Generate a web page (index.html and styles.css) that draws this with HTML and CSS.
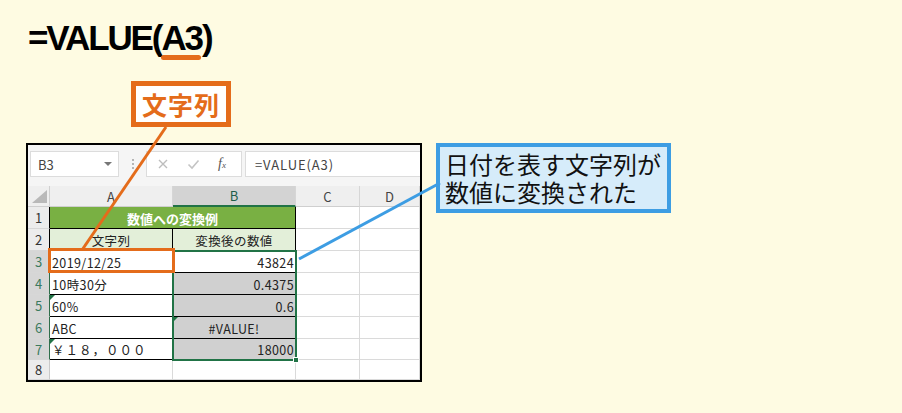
FILE: index.html
```html
<!DOCTYPE html>
<html lang="ja">
<head>
<meta charset="utf-8">
<title>VALUE</title>
<link rel="stylesheet" href="styles.css">
</head>
<body>
<div class="page">
  <h1 class="title">=VALUE(<span class="ref">A3</span>)</h1>
  <div class="tag">文字列</div>
  <div class="main">
    <div class="sheet">
      <div class="toolbar">
        <div class="namebox"><span>B3</span><span class="dd"></span></div>
        <div class="grip"><span></span><span></span><span></span></div>
        <div class="fnbox">
          <svg class="ico" width="12" height="12" viewBox="0 0 12 12"><path d="M2 2 L10 10 M10 2 L2 10" stroke="#bdbdbd" stroke-width="1.4" fill="none"/></svg>
          <svg class="ico" width="13" height="12" viewBox="0 0 13 12"><path d="M1.5 6.5 L5 10 L11.5 2.5" stroke="#c4c4c4" stroke-width="1.6" fill="none"/></svg>
          <span class="fx">f<small>x</small></span>
        </div>
        <div class="formula">=VALUE(A3)</div>
      </div>
      <div class="grid">
        <div class="corner"><span class="tri"></span></div>
        <div class="ch">A</div><div class="ch sel">B</div><div class="ch">C</div><div class="ch">D</div>

        <div class="rh dark">1</div><div class="c d merged">数値への変換例</div><div class="c"></div><div class="c"></div>

        <div class="rh dark">2</div><div class="c d lg center">文字列</div><div class="c d lg center">変換後の数値</div><div class="c"></div><div class="c"></div>

        <div class="rh hi">3</div><div class="c d">2019/12/25</div><div class="c d right">43824</div><div class="c"></div><div class="c"></div>

        <div class="rh hi">4</div><div class="c d">10時30分</div><div class="c d gray right">0.4375</div><div class="c"></div><div class="c"></div>

        <div class="rh hi">5</div><div class="c d err">60%</div><div class="c d gray right">0.6</div><div class="c"></div><div class="c"></div>

        <div class="rh hi">6</div><div class="c d">ABC</div><div class="c d gray center err">#VALUE!</div><div class="c"></div><div class="c"></div>

        <div class="rh hi">7</div><div class="c d err wide">￥１８，０００</div><div class="c d gray right">18000</div><div class="c"></div><div class="c"></div>

        <div class="rh">8</div><div class="c"></div><div class="c"></div><div class="c"></div><div class="c"></div>
      </div>
      <div class="selection"><span class="handle"></span></div>
      <div class="focus"></div>
    </div>
    <div class="callout"><div class="cl">日付を表す文字列が</div><div class="cl">数値に変換された</div></div>
  </div>
  <svg class="leaders" width="902" height="413" viewBox="0 0 902 413">
    <line x1="166" y1="127" x2="82" y2="250" stroke="#e46c1b" stroke-width="3"/>
    <line x1="299" y1="259" x2="440" y2="183" stroke="#3d9de3" stroke-width="3"/>
  </svg>
</div>
</body>
</html>
```

FILE: styles.css
```css
* { box-sizing: border-box; }
html, body { margin: 0; padding: 0; }
body { background: #fefbe2; font-family: "Noto Sans CJK JP", "Noto Sans", sans-serif; }

.page { position: relative; width: 902px; height: 413px; overflow: hidden; }

.title {
  margin: 0;
  padding: 20px 0 0 28px;
  font-family: "Liberation Sans", Arial, sans-serif;
  font-weight: bold;
  font-size: 35px;
  line-height: 35px;
  height: 55px;
  letter-spacing: -2.1px;
  color: #000;
}
.ref { position: relative; }
.ref::after {
  content: "";
  position: absolute;
  left: 0; right: 1px;
  top: 37px;
  height: 5px;
  border-radius: 3px;
  background: #e46c1b;
}

.tag {
  margin: 26px 0 0 131px;
  width: 100px; height: 46px;
  border: 5px solid #e46c1b;
  background: #fff;
  color: #e46c1b;
  font-weight: bold;
  font-size: 25px;
  display: flex; align-items: center; justify-content: center;
  letter-spacing: 1px;
}

.main { display: flex; align-items: flex-start; margin-top: 16px; padding-left: 26px; }

.sheet {
  position: relative;
  width: 396px;
  border: 2px solid #000;
  background: #fff;
  font-size: 12.5px;
  color: #222;
}

.toolbar {
  height: 41px;
  background: #f5f5f5;
  display: flex; align-items: flex-start;
  padding: 6px 0 0 2px;
}
.namebox {
  width: 89px; height: 26px;
  background: #fff; border: 1px solid #dcdcdc;
  display: flex; align-items: center; justify-content: space-between;
  padding: 0 6px 0 7px;
  color: #444; font-size: 13px;
}
.dd { width: 0; height: 0; border-left: 4px solid transparent; border-right: 4px solid transparent; border-top: 4px solid #777; }
.grip { width: 27px; height: 26px; display: flex; flex-direction: column; align-items: center; justify-content: center; gap: 2px; }
.grip span { width: 2px; height: 2px; background: #b5b5b5; }
.fnbox {
  width: 96px; height: 26px;
  background: #fff; border: 1px solid #dcdcdc;
  display: flex; align-items: center;
  padding-left: 10px; gap: 18px;
}
.fx { font-family: "Liberation Serif", serif; font-style: italic; font-size: 14px; color: #555; }
.fx small { font-size: 9px; }
.formula {
  flex: 1; height: 26px; margin-left: 3px;
  background: #fff; border: 1px solid #dcdcdc; border-right: none;
  padding-left: 9px;
  display: flex; align-items: center;
  color: #444; font-size: 13px; letter-spacing: 0.9px;
}

.grid {
  display: grid;
  grid-template-columns: 22px 123px 123px 64px 60px;
  grid-template-rows: 21px 22px 22px 22px 22px 22px 22px 21px 20px;
}
.grid > div { display: flex; align-items: center; position: relative; }

.corner { background: #efefef; border-right: 1px solid #d0d0d0; border-bottom: 1px solid #cfcfcf; }
.tri { position: absolute; right: 2px; bottom: 3px; width: 15px; height: 13px; background: #b9b9b9; clip-path: polygon(100% 0, 100% 100%, 0 100%); }

.ch { background: #efefef; border-right: 1px solid #d6d6d6; border-bottom: 1px solid #cfcfcf; justify-content: center; color: #444; font-size: 13px; }
.ch.sel { background: #d3d3d3; color: #1e5e4a; border-bottom: 2px solid #217346; }

.rh { background: #ececec; border-right: 1px solid #c9c9c9; border-bottom: 1px solid #d7d7d7; justify-content: center; color: #333; font-size: 13px; }
.rh.dark { border-right: 1px solid #000; }
.rh.hi { background: #d6d6d6; color: #3b7a5e; border-right: 1px solid #2f6e4a; }

.c { background: #fff; border-right: 1px solid #dadada; border-bottom: 1px solid #dadada; padding: 1px 2px 0 2px; white-space: nowrap; letter-spacing: 0.4px; }
.c.d { border-right: 1px solid #000; border-bottom: 1px solid #000; }
.c.merged { grid-column: span 2; background: #79b043; color: #fff; font-weight: bold; justify-content: center; font-size: 13px; letter-spacing: 0; }
.c.lg { background: #e3efd9; }
.c.center { justify-content: center; }
.c.right { justify-content: flex-end; padding-right: 1px; }
.c.gray { background: #d0d0d0; }
.c.wide { letter-spacing: 1px; }
.c.err::before {
  content: ""; position: absolute; left: 0; top: 0;
  border-top: 5px solid #217346; border-right: 5px solid transparent;
}

.selection {
  position: absolute; left: 144px; top: 105px; width: 125px; height: 111px;
  border: 2px solid #217346;
}
.handle { position: absolute; right: -4px; bottom: -4px; width: 6px; height: 6px; background: #217346; border: 1px solid #fff; }

.focus {
  position: absolute; left: 20px; top: 103px; width: 127px; height: 25px;
  border: 3px solid #e46c1b;
}

.callout {
  margin-left: 14px;
  width: 235px; height: 70px;
  border: 4px solid #3d9de3;
  background: #d6ecfa;
  color: #111;
  font-size: 24px;
  padding: 3px 0 0 5px;
  white-space: nowrap;
}
.cl { height: 28px; line-height: 28px; }

.leaders { position: absolute; left: 0; top: 0; pointer-events: none; }
```
